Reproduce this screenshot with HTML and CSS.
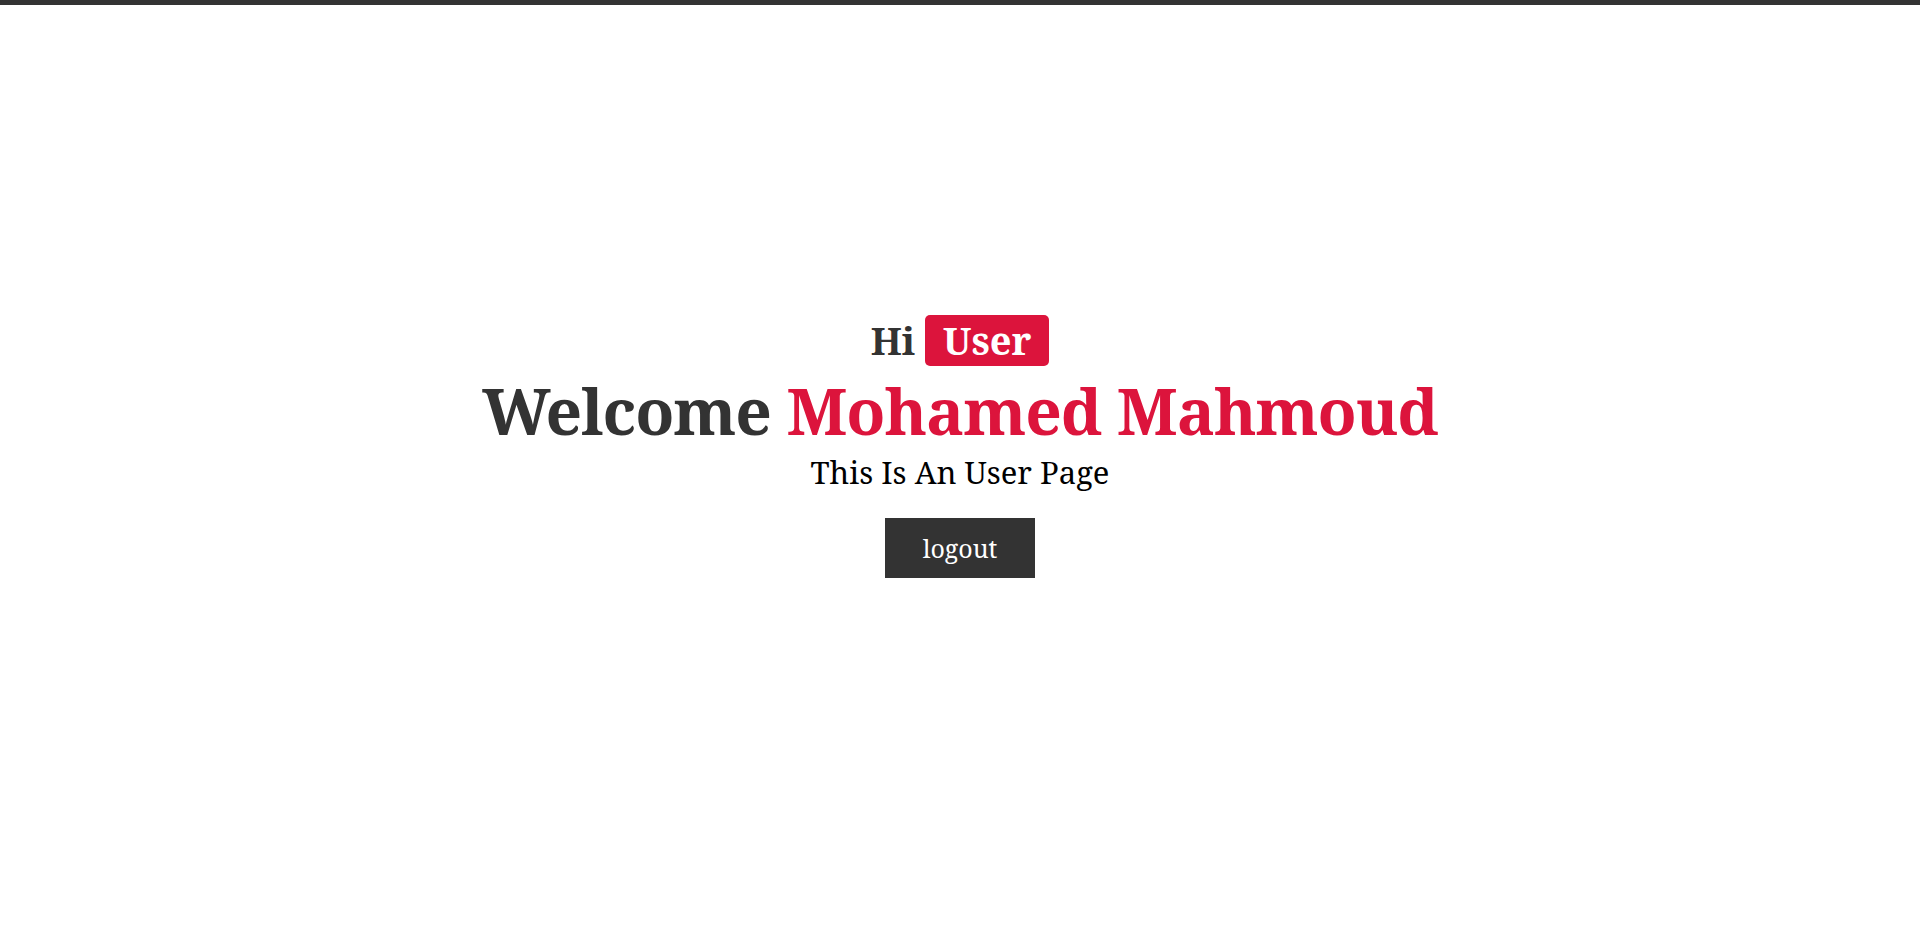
FILE: index.html
```html
<!DOCTYPE html>
<html lang="en">
<head>
<meta charset="utf-8">
<title>User Page</title>
<link rel="stylesheet" href="styles.css">
</head>
<body>
<div class="topbar"></div>
<main class="page">
  <h3 class="greet">Hi <span class="badge">User</span></h3>
  <h1 class="welcome">Welcome <span class="name">Mohamed Mahmoud</span></h1>
  <p class="sub">This Is An User Page</p>
  <a class="logout" href="#">logout</a>
</main>
</body>
</html>
```
FILE: styles.css
```css
* { box-sizing: border-box; }
html, body { margin: 0; padding: 0; }
body {
  font-family: "Noto Serif", "DejaVu Serif", serif;
  background: #fff;
  color: #000;
}
.topbar {
  height: 5px;
  background: #333;
}
.page {
  min-height: calc(100vh - 5px);
  display: flex;
  flex-direction: column;
  align-items: center;
  justify-content: center;
  padding-bottom: 44px;
  text-align: center;
}
.greet {
  margin: 0 0 5px;
  font-size: 38px;
  font-weight: 700;
  color: #333;
  line-height: 51px;
}
.badge {
  display: inline-block;
  background: #dc143c;
  color: #fff;
  padding: 0 18px;
  border-radius: 5px;
  line-height: 51px;
}
.welcome {
  margin: 0;
  font-size: 64px;
  font-weight: 700;
  letter-spacing: -1.1px;
  color: #333;
  line-height: 1.25;
}
.name { color: #dc143c; }
.sub {
  margin: 0 0 25px;
  font-size: 31px;
}
.logout {
  display: inline-block;
  width: 150px;
  height: 60px;
  line-height: 60px;
  background: #333;
  color: #fff;
  font-size: 25px;
  text-decoration: none;
}
```
